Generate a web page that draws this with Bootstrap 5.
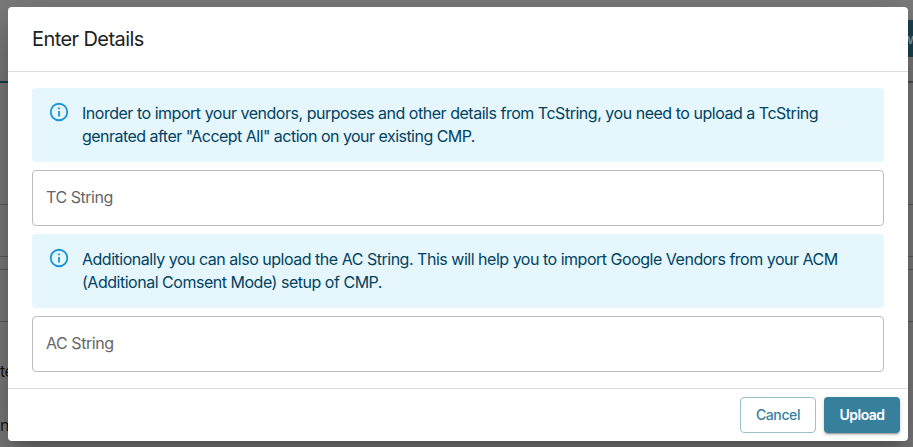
<!DOCTYPE html>
<html lang="en">
<head>
<meta charset="utf-8">
<meta name="viewport" content="width=device-width, initial-scale=1">
<title>Enter Details</title>
<link href="https://cdn.jsdelivr.net/npm/bootstrap@5.3.0/dist/css/bootstrap.min.css" rel="stylesheet">
<style>
body{font-family:Inter,"Liberation Sans",sans-serif;background:#7b7b7b;height:447px}
.page-row{border-bottom:1px solid #5c5c5c;font-size:16px;line-height:24px;color:#151515}
.page-top{height:83px;border-bottom:2px solid #173f50;border-image:linear-gradient(90deg,#173f50 60%,#4b4f57 60%) 1}
.page-action{width:13px;height:37px;margin-top:20px;background:#1c4352;color:#8b989d;font-size:14px;font-weight:600;border-radius:4px 0 0 4px;line-height:37px;padding-left:7px}
.r1{height:122px}.r2{height:52px}.r3{height:13px}.r4{height:52px}
.left-label{height:24px;margin-top:37px;margin-bottom:30px;border:0;letter-spacing:-.5px}
.left-label+.left-label{margin:0}
.sheet{left:8px;top:7px;width:900px;height:434px;background:#fff;border-radius:4px;box-shadow:0 11px 15px -7px rgba(0,0,0,.2),0 24px 38px 3px rgba(0,0,0,.14),0 9px 46px 8px rgba(0,0,0,.12)}
.sheet-head{height:65px;border-bottom:1px solid #dedede;font-size:20px;color:#212121;padding-left:24px}
.sheet-body{padding:16px 24px}
.notice{height:74px;background:#e5f6fd;border-radius:4px;color:#014361;padding:14px 16px;font-size:16px;line-height:23px}
.notice svg{width:22px;height:22px;margin:-1px 12px 0 0;fill:#1a94db}
.notice span,.sheet-head span{display:block;white-space:nowrap}
.field{height:56px;border:1px solid #bdbdbd;border-radius:4px;font-size:16px;padding:0 13px 2px;letter-spacing:-.45px}
.field::placeholder{color:#666;opacity:1}
.sheet-foot{height:53px;border-top:1px solid #dedede;padding:8px}
.act{width:76px;height:36px;font-size:14px;font-weight:500;border-radius:4px;padding:0 0 1px;letter-spacing:-.4px}
.act-cancel{color:#37809c;border:1px solid #9bc0ce}
.act-upload{color:#fff;background:#37809c;border:0;font-weight:600;letter-spacing:-.55px;box-shadow:0 3px 1px -2px rgba(0,0,0,.2),0 2px 2px rgba(0,0,0,.14),0 1px 5px rgba(0,0,0,.12)}
.t0{letter-spacing:-.58px}.t1{letter-spacing:-.476px}.t2{letter-spacing:-.53px}.t3{letter-spacing:-.482px}.t4{letter-spacing:-.48px}
</style>
</head>
<body class="overflow-hidden position-relative">
<div aria-hidden="true">
  <div class="page-top d-flex justify-content-end"><div class="page-action overflow-hidden">w</div></div>
  <div class="page-row r1"></div><div class="page-row r2"></div><div class="page-row r3"></div><div class="page-row r4"></div>
  <div class="page-row left-label">te</div><div class="page-row left-label">ne</div>
</div>
<div class="sheet position-absolute" role="dialog" aria-labelledby="dlg">
  <div class="sheet-head d-flex align-items-center" id="dlg"><span class="t0">Enter Details</span></div>
  <div class="sheet-body d-flex flex-column gap-2">
    <div class="notice d-flex">
      <svg class="flex-shrink-0" viewBox="0 0 24 24"><path d="M11 7h2v2h-2zM11 11h2v6h-2zM12 2a10 10 0 1 0 0 20 10 10 0 0 0 0-20zm0 18a8 8 0 1 1 0-16 8 8 0 0 1 0 16z"/></svg>
      <div><span class="t1">Inorder to import your vendors, purposes and other details from TcString, you need to upload a TcString</span><span class="t2">genrated after "Accept All" action on your existing CMP.</span></div>
    </div>
    <input class="field form-control" placeholder="TC String" aria-label="TC String">
    <div class="notice d-flex">
      <svg class="flex-shrink-0" viewBox="0 0 24 24"><path d="M11 7h2v2h-2zM11 11h2v6h-2zM12 2a10 10 0 1 0 0 20 10 10 0 0 0 0-20zm0 18a8 8 0 1 1 0-16 8 8 0 0 1 0 16z"/></svg>
      <div><span class="t3">Additionally you can also upload the AC String. This will help you to import Google Vendors from your ACM</span><span class="t4">(Additional Comsent Mode) setup of CMP.</span></div>
    </div>
    <input class="field form-control" placeholder="AC String" aria-label="AC String">
  </div>
  <div class="sheet-foot d-flex justify-content-end gap-2">
    <button class="btn act act-cancel" type="button">Cancel</button>
    <button class="btn act act-upload" type="button">Upload</button>
  </div>
</div>
<script src="https://cdn.jsdelivr.net/npm/bootstrap@5.3.0/dist/js/bootstrap.bundle.min.js"></script>
</body>
</html>
